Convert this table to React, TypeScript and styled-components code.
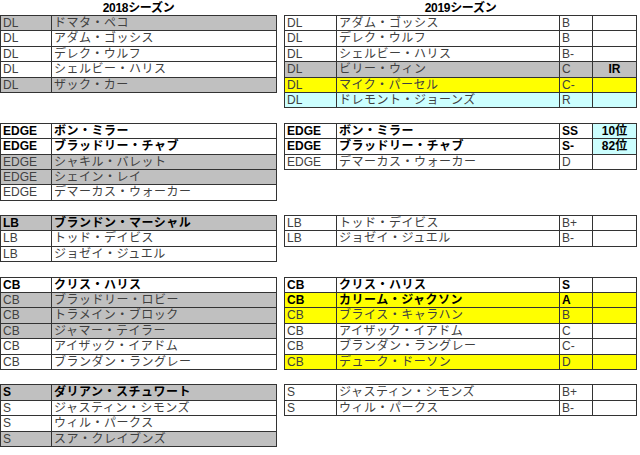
import React from 'react';
import styled, { createGlobalStyle } from 'styled-components';

type Fill = 'none' | 'gray' | 'yellow' | 'cyan';

const FILLS: Record<Fill, string> = {
  none: '#ffffff',
  gray: '#c0c0c0',
  yellow: '#ffff00',
  cyan: '#ccffff',
};

interface Entry {
  pos: string;
  name: string;
  grade?: string;
  note?: string;
  fill?: Fill;
  bold?: boolean;
  noteFill?: Fill;
}

interface Group {
  key: string;
  prev: Entry[];
  curr: Entry[];
}

const GROUPS: Group[] = [
  {
    key: 'DL',
    prev: [
      { pos: 'DL', name: 'ドマタ・ペコ', fill: 'gray' },
      { pos: 'DL', name: 'アダム・ゴッシス' },
      { pos: 'DL', name: 'デレク・ウルフ' },
      { pos: 'DL', name: 'シェルビー・ハリス' },
      { pos: 'DL', name: 'ザック・カー', fill: 'gray' },
    ],
    curr: [
      { pos: 'DL', name: 'アダム・ゴッシス', grade: 'B' },
      { pos: 'DL', name: 'デレク・ウルフ', grade: 'B' },
      { pos: 'DL', name: 'シェルビー・ハリス', grade: 'B-' },
      { pos: 'DL', name: 'ビリー・ウィン', grade: 'C', note: 'IR', fill: 'gray' },
      { pos: 'DL', name: 'マイク・パーセル', grade: 'C-', fill: 'yellow' },
      { pos: 'DL', name: 'ドレモント・ジョーンズ', grade: 'R', fill: 'cyan' },
    ],
  },
  {
    key: 'EDGE',
    prev: [
      { pos: 'EDGE', name: 'ボン・ミラー', bold: true },
      { pos: 'EDGE', name: 'ブラッドリー・チャブ', bold: true },
      { pos: 'EDGE', name: 'シャキル・バレット', fill: 'gray' },
      { pos: 'EDGE', name: 'シェイン・レイ', fill: 'gray' },
      { pos: 'EDGE', name: 'デマーカス・ウォーカー' },
    ],
    curr: [
      { pos: 'EDGE', name: 'ボン・ミラー', grade: 'SS', note: '10位', bold: true, noteFill: 'cyan' },
      { pos: 'EDGE', name: 'ブラッドリー・チャブ', grade: 'S-', note: '82位', bold: true, noteFill: 'cyan' },
      { pos: 'EDGE', name: 'デマーカス・ウォーカー', grade: 'D' },
    ],
  },
  {
    key: 'LB',
    prev: [
      { pos: 'LB', name: 'ブランドン・マーシャル', bold: true, fill: 'gray' },
      { pos: 'LB', name: 'トッド・デイビス' },
      { pos: 'LB', name: 'ジョゼイ・ジュエル' },
    ],
    curr: [
      { pos: 'LB', name: 'トッド・デイビス', grade: 'B+' },
      { pos: 'LB', name: 'ジョゼイ・ジュエル', grade: 'B-' },
    ],
  },
  {
    key: 'CB',
    prev: [
      { pos: 'CB', name: 'クリス・ハリス', bold: true },
      { pos: 'CB', name: 'ブラッドリー・ロビー', fill: 'gray' },
      { pos: 'CB', name: 'トラメイン・ブロック', fill: 'gray' },
      { pos: 'CB', name: 'ジャマー・テイラー', fill: 'gray' },
      { pos: 'CB', name: 'アイザック・イアドム' },
      { pos: 'CB', name: 'ブランダン・ラングレー' },
    ],
    curr: [
      { pos: 'CB', name: 'クリス・ハリス', grade: 'S', bold: true },
      { pos: 'CB', name: 'カリーム・ジャクソン', grade: 'A', bold: true, fill: 'yellow' },
      { pos: 'CB', name: 'ブライス・キャラハン', grade: 'B', fill: 'yellow' },
      { pos: 'CB', name: 'アイザック・イアドム', grade: 'C' },
      { pos: 'CB', name: 'ブランダン・ラングレー', grade: 'C-' },
      { pos: 'CB', name: 'デューク・ドーソン', grade: 'D', fill: 'yellow' },
    ],
  },
  {
    key: 'S',
    prev: [
      { pos: 'S', name: 'ダリアン・スチュワート', bold: true, fill: 'gray' },
      { pos: 'S', name: 'ジャスティン・シモンズ' },
      { pos: 'S', name: 'ウィル・パークス' },
      { pos: 'S', name: 'スア・クレイブンズ', fill: 'gray' },
    ],
    curr: [
      { pos: 'S', name: 'ジャスティン・シモンズ', grade: 'B+' },
      { pos: 'S', name: 'ウィル・パークス', grade: 'B-' },
    ],
  },
];

const LINE = '#333333';
const ROW_H = 15.4;

const GlobalStyle = createGlobalStyle`
  html, body {
    margin: 0;
    padding: 0;
    background: #ffffff;
  }
  body {
    font-family: "Liberation Sans", "Noto Sans CJK JP", sans-serif;
    color: #404040;
  }
`;

const Page = styled.div`
  width: 640px;
  height: 455px;
  overflow: hidden;
  display: flex;
  flex-direction: column;
  gap: ${ROW_H - 1}px;
`;

const TitleBar = styled.div`
  display: flex;
  gap: 7px;
  height: 15px;
  margin-bottom: -${ROW_H - 1}px;
`;

const Title = styled.div<{ $w: number }>`
  width: ${(p) => p.$w}px;
  text-align: center;
  font-size: 12px;
  font-weight: 700;
  line-height: 16px;
  color: #000000;
  letter-spacing: -0.3px;
`;

const Section = styled.div`
  display: flex;
  align-items: flex-start;
  gap: 7px;
`;

const Sheet = styled.div<{ $w: number }>`
  width: ${(p) => p.$w}px;
  box-sizing: border-box;
  border-top: 1px solid ${LINE};
  border-left: 1px solid ${LINE};
  flex-shrink: 0;
`;

const Row = styled.div<{ $cols: string; $fill: Fill; $bold: boolean }>`
  display: grid;
  grid-template-columns: ${(p) => p.$cols};
  height: ${ROW_H}px;
  box-sizing: border-box;
  border-bottom: 1px solid ${LINE};
  background: ${(p) => FILLS[p.$fill]};
  font-weight: ${(p) => (p.$bold ? 700 : 400)};
  font-size: 12px;
  color: ${(p) => (p.$bold ? '#000000' : '#404040')};
`;

const Cell = styled.div<{ $center?: boolean; $fill?: Fill; $bold?: boolean }>`
  box-sizing: border-box;
  border-right: 1px solid ${LINE};
  padding-left: ${(p) => (p.$center ? 0 : 2)}px;
  text-align: ${(p) => (p.$center ? 'center' : 'left')};
  background: ${(p) => (p.$fill ? FILLS[p.$fill] : 'transparent')};
  font-weight: ${(p) => (p.$bold ? 700 : 'inherit')};
  color: ${(p) => (p.$bold ? '#000000' : 'inherit')};
  line-height: ${ROW_H - 1}px;
  white-space: nowrap;
  overflow: hidden;
`;

const NameCell = styled(Cell)`
  letter-spacing: 0.5px;
`;

const PREV_COLS = '51px 225px';
const CURR_COLS = '52px 223px 33px 44px';

const PrevTable: React.FC<{ rows: Entry[] }> = ({ rows }) => (
  <Sheet $w={277}>
    {rows.map((r, i) => (
      <Row key={i} $cols={PREV_COLS} $fill={r.fill ?? 'none'} $bold={!!r.bold}>
        <Cell>{r.pos}</Cell>
        <NameCell>{r.name}</NameCell>
      </Row>
    ))}
  </Sheet>
);

const CurrTable: React.FC<{ rows: Entry[] }> = ({ rows }) => (
  <Sheet $w={353}>
    {rows.map((r, i) => (
      <Row key={i} $cols={CURR_COLS} $fill={r.fill ?? 'none'} $bold={!!r.bold}>
        <Cell>{r.pos}</Cell>
        <NameCell>{r.name}</NameCell>
        <Cell>{r.grade}</Cell>
        <Cell $center $bold $fill={r.noteFill}>
          {r.note}
        </Cell>
      </Row>
    ))}
  </Sheet>
);

export default function App() {
  return (
    <>
      <GlobalStyle />
      <Page>
        <TitleBar>
          <Title $w={277}>2018シーズン</Title>
          <Title $w={353}>2019シーズン</Title>
        </TitleBar>
        {GROUPS.map((g) => (
          <Section key={g.key}>
            <PrevTable rows={g.prev} />
            <CurrTable rows={g.curr} />
          </Section>
        ))}
      </Page>
    </>
  );
}
